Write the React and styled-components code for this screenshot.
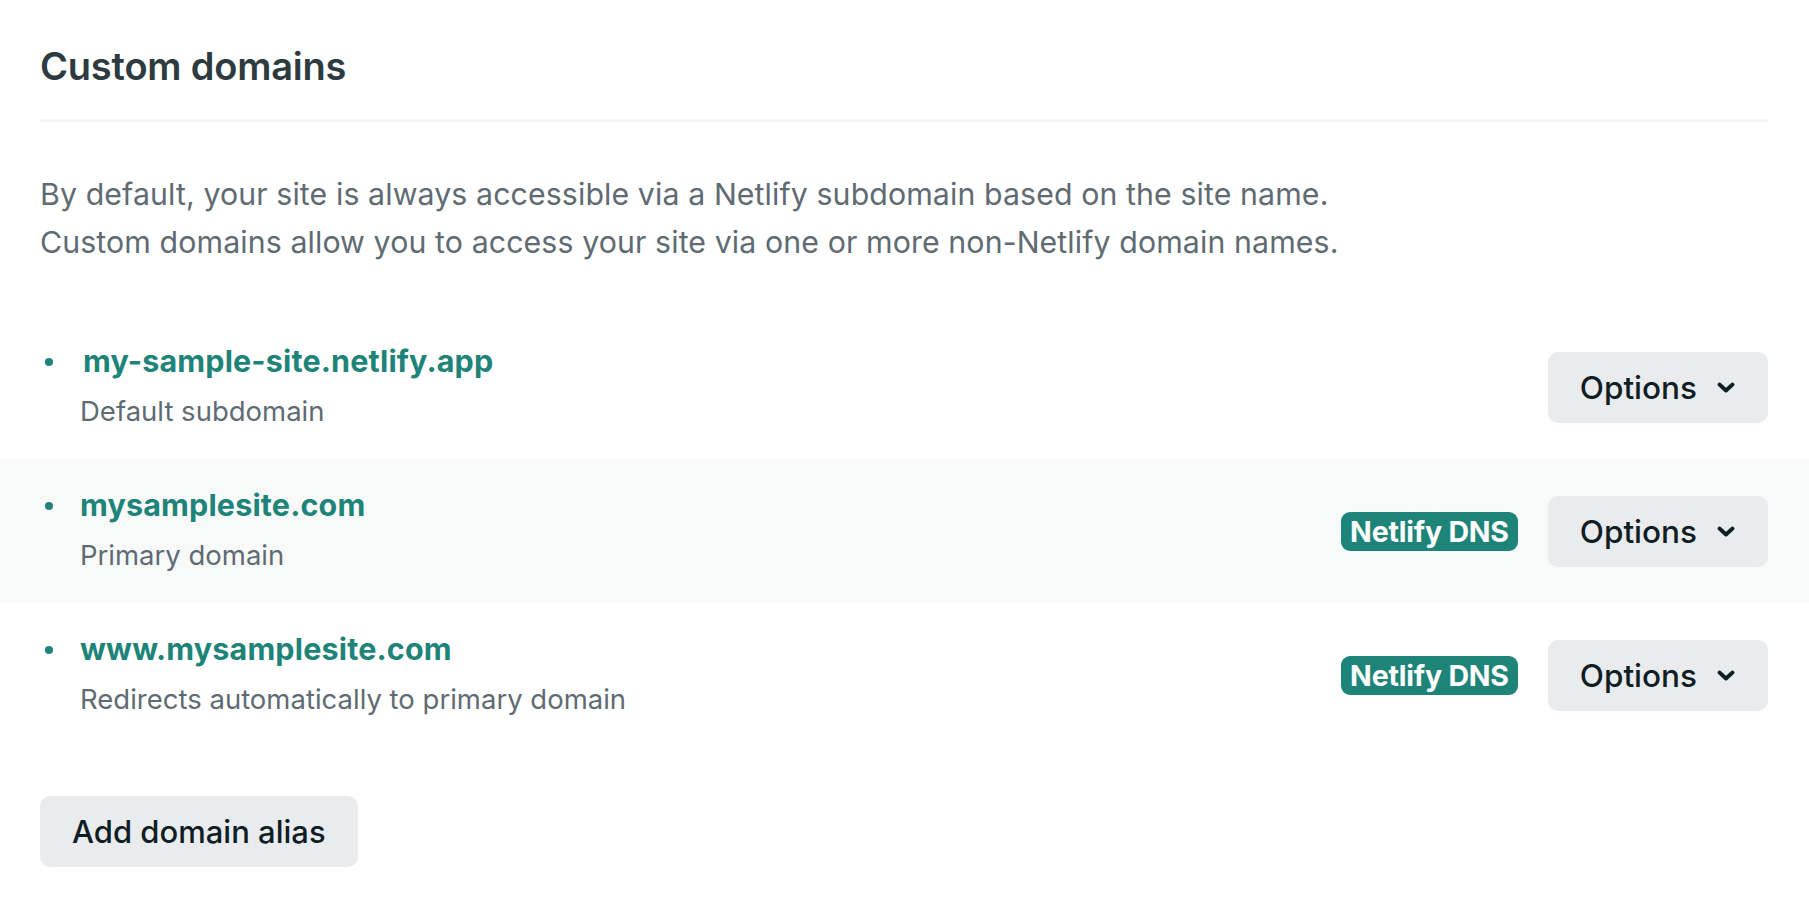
import React from 'react';
import styled, { createGlobalStyle } from 'styled-components';

const GlobalStyle = createGlobalStyle`
  body {
    margin: 0;
    background: #ffffff;
    font-family: Inter, 'Noto Sans', sans-serif;
    -webkit-font-smoothing: antialiased;
  }
`;

const Card = styled.section`
  width: 1809px;
  padding: 43px 0 40px;
  box-sizing: border-box;
`;

const Header = styled.header`
  margin: 0 41px 0 40px;
  padding-bottom: 30px;
  border-bottom: 3px solid #f5f7f7;
`;

const Title = styled.h2`
  margin: 0;
  font-size: 38px;
  line-height: 46px;
  font-weight: 600;
  color: #2d3b41;
  letter-spacing: -0.2px;
`;

const Intro = styled.p`
  margin: 48px 40px 49px;
  font-size: 30.3px;
  line-height: 48px;
  color: #5f6b73;
  letter-spacing: 0.1px;
`;

const DomainList = styled.ul`
  list-style: none;
  margin: 0;
  padding: 0;
`;

const Row = styled.li`
  display: flex;
  align-items: center;
  justify-content: space-between;
  height: 144px;
  padding: 0 41px 0 40px;
  background: ${p => (p.$highlight ? '#f8fafa' : 'transparent')};
`;

const Info = styled.div`
  display: flex;
  align-items: flex-start;
`;

const Bullet = styled.span`
  width: 8px;
  height: 8px;
  border-radius: 50%;
  background: #1e8479;
  margin: 19px 27px 0 5px;
  flex-shrink: 0;
`;

const Texts = styled.div`
  display: flex;
  flex-direction: column;
  gap: 4px;
`;

const DomainName = styled.a`
  font-size: 30.5px;
  line-height: 44px;
  font-weight: 650;
  color: #1e8479;
  text-decoration: none;
  letter-spacing: 0.15px;
  margin-left: ${p => p.$shift || 0}px;
`;

const Caption = styled.span`
  font-size: 27.5px;
  line-height: 48px;
  color: #5f6b73;
`;

const Actions = styled.div`
  display: flex;
  align-items: center;
  gap: 30px;
`;

const Badge = styled.span`
  display: inline-flex;
  align-items: center;
  height: 39px;
  padding: 0 9px;
  border-radius: 9px;
  background: #1e8479;
  color: #ffffff;
  font-size: 28.5px;
  font-weight: 700;
  letter-spacing: -0.2px;
`;

const Button = styled.button`
  display: inline-flex;
  align-items: center;
  gap: 20px;
  height: 71px;
  padding: 0 ${p => (p.$menu ? '33px' : '32px')} 0 32px;
  border: none;
  border-radius: 10px;
  background: #e9ebed;
  color: #0e1e25;
  font-family: Inter, 'Noto Sans', sans-serif;
  font-size: ${p => (p.$menu ? '31.5px' : '31px')};
  font-weight: 500;
  cursor: pointer;
`;

const Footer = styled.div`
  margin: 49px 40px 0;
`;

const Chevron = () => (
  <svg width="18" height="11" viewBox="0 0 18 11" fill="none">
    <path d="M2.5 2.5 L9 8.5 L15.5 2.5" stroke="#0e1e25" strokeWidth="3.8" strokeLinecap="round" strokeLinejoin="round" />
  </svg>
);

const domains = [
  { name: 'my-sample-site.netlify.app', caption: 'Default subdomain', shift: 3 },
  { name: 'mysamplesite.com', caption: 'Primary domain', dns: true, highlight: true },
  { name: 'www.mysamplesite.com', caption: 'Redirects automatically to primary domain', dns: true },
];

export default function App() {
  return (
    <Card>
      <GlobalStyle />
      <Header>
        <Title>Custom domains</Title>
      </Header>
      <Intro>
        By default, your site is always accessible via a Netlify subdomain based on the site name.
        <br />
        Custom domains allow you to access your site via one or more non-Netlify domain names.
      </Intro>
      <DomainList>
        {domains.map(d => (
          <Row key={d.name} $highlight={d.highlight}>
            <Info>
              <Bullet />
              <Texts>
                <DomainName href="#" $shift={d.shift}>{d.name}</DomainName>
                <Caption>{d.caption}</Caption>
              </Texts>
            </Info>
            <Actions>
              {d.dns && <Badge>Netlify DNS</Badge>}
              <Button type="button" $menu>
                Options
                <Chevron />
              </Button>
            </Actions>
          </Row>
        ))}
      </DomainList>
      <Footer>
        <Button type="button">Add domain alias</Button>
      </Footer>
    </Card>
  );
}
